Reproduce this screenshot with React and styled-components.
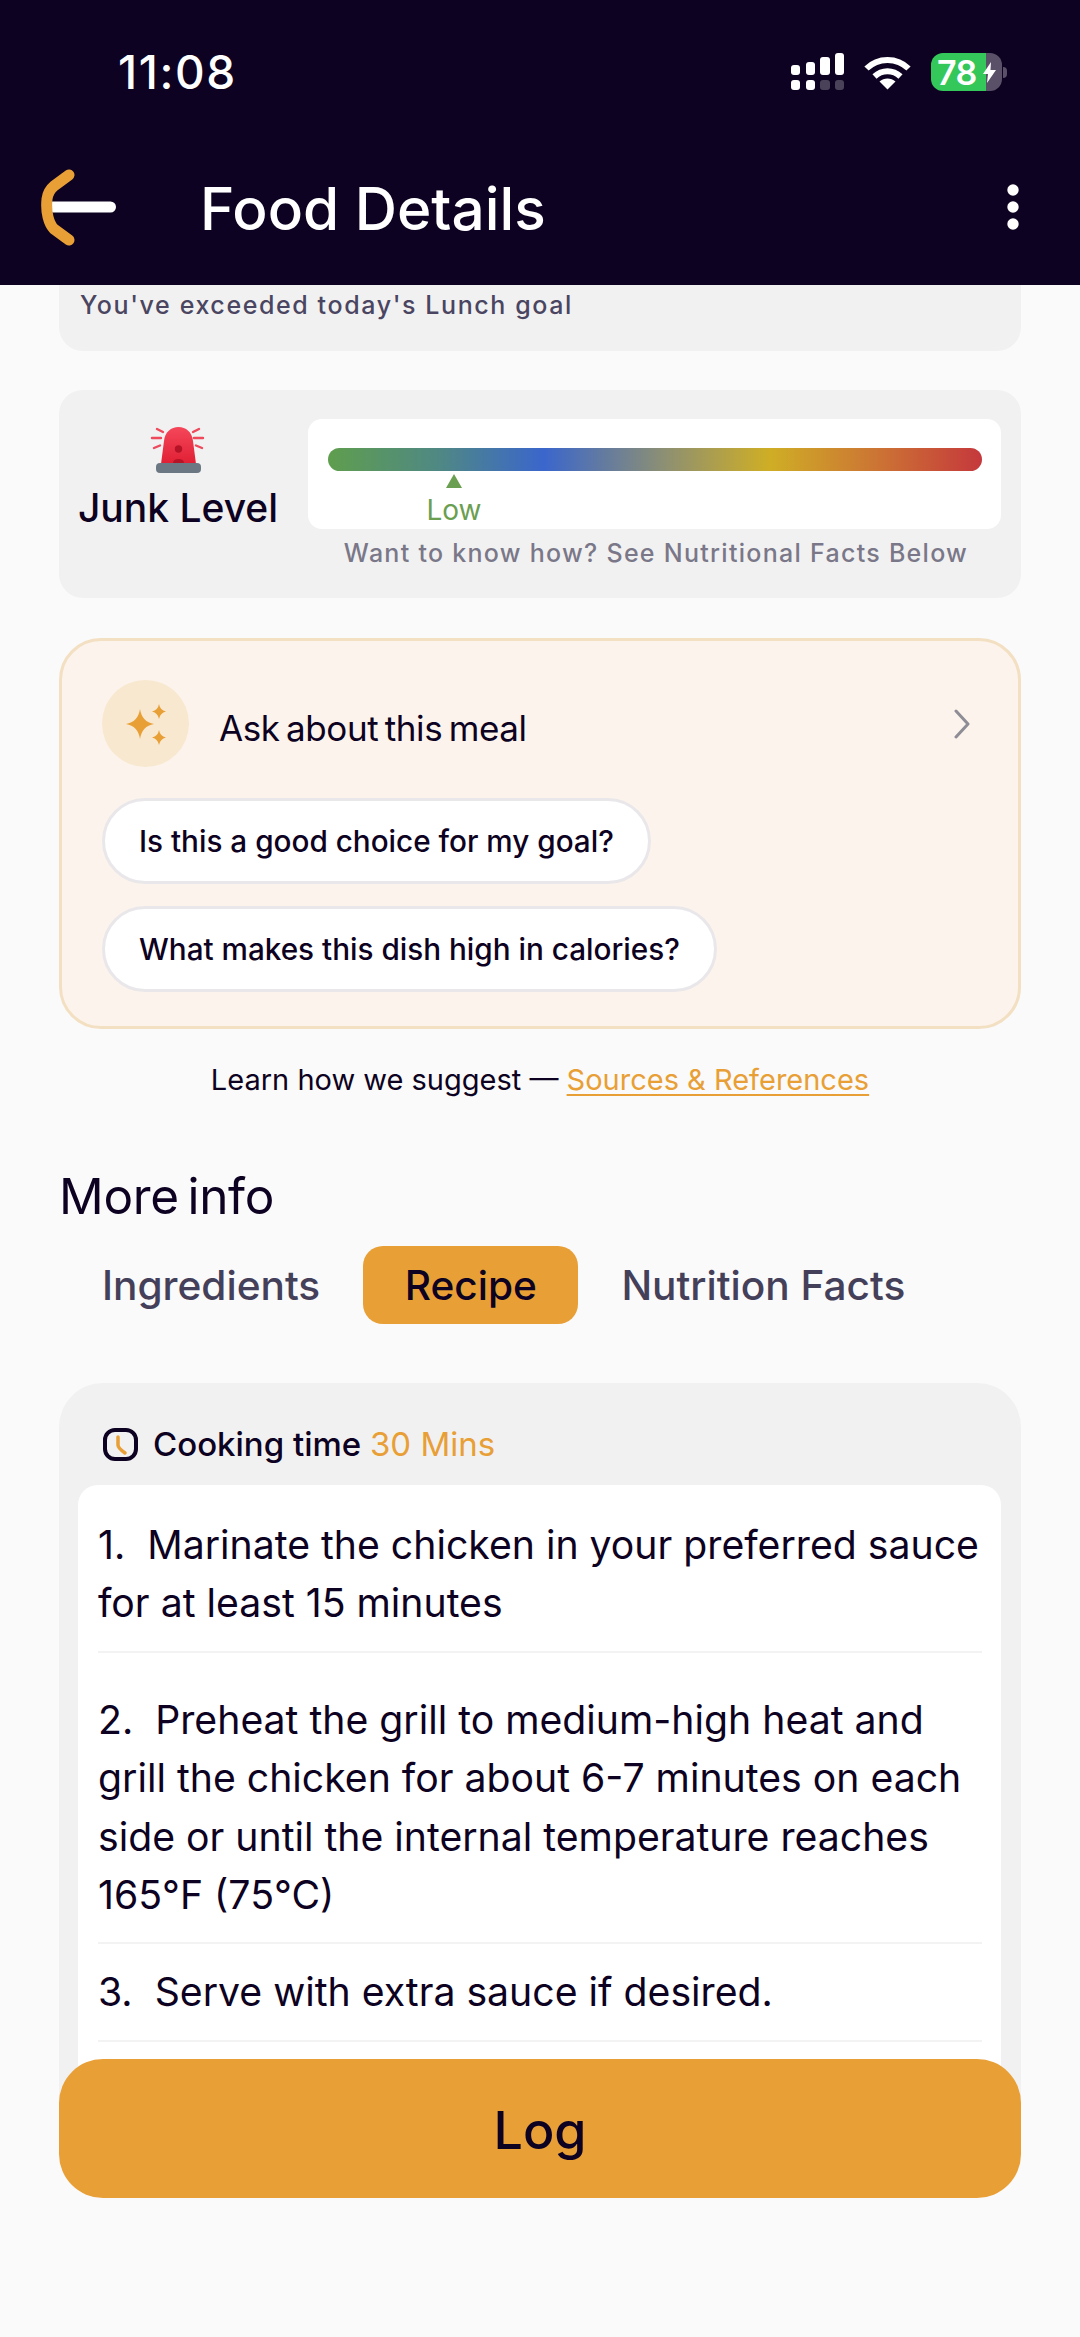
import React from "react";
import styled, { createGlobalStyle } from "styled-components";

const GlobalStyle = createGlobalStyle`
  html, body {
    margin: 0;
    padding: 0;
    background: #fafafa;
  }
  * {
    box-sizing: border-box;
  }
`;

const Phone = styled.div`
  position: relative;
  display: flex;
  flex-direction: column;
  width: 1080px;
  height: 2337px;
  overflow: hidden;
  background: #fafafa;
  color: #0d0221;
  font-family: Inter, "Liberation Sans", sans-serif;
`;

const Header = styled.header`
  flex: none;
  height: 285px;
  background: #0d0221;
  color: #fff;
`;

const StatusBar = styled.div`
  display: flex;
  align-items: center;
  justify-content: space-between;
  height: 144px;
  padding: 0 73px 0 118px;
`;

const Time = styled.span`
  font-size: 46px;
  font-weight: 500;
  letter-spacing: 1.6px;
`;

const StatusIcons = styled.div`
  display: flex;
  align-items: center;
  gap: 20px;
`;

const BatteryWrap = styled.div`
  display: flex;
  align-items: center;
  gap: 1px;
`;

const Battery = styled.div`
  position: relative;
  display: flex;
  align-items: center;
  width: 71px;
  height: 38px;
  padding-left: 6px;
  border-radius: 12px;
  overflow: hidden;
  background: linear-gradient(90deg, #34c759 0 55px, #5a5168 55px);
  font-size: 34px;
  font-weight: 600;
  letter-spacing: -0.5px;
`;

const BatteryNub = styled.div`
  width: 4px;
  height: 11px;
  border-radius: 0 5px 5px 0;
  background: #5a5168;
`;

const BatteryBolt = styled.svg`
  position: absolute;
  left: 52px;
  top: 9px;
`;

const NavBar = styled.div`
  display: flex;
  align-items: center;
  height: 126px;
  padding: 0 61px 0 40px;
`;

const NavTitle = styled.h1`
  flex: 1;
  margin: 2px 0 0 82px;
  font-size: 58.5px;
  font-weight: 500;
`;

const Content = styled.main`
  flex: 1;
  display: flex;
  flex-direction: column;
  padding: 0 59px;
`;

const GoalCard = styled.div`
  height: 66px;
  padding: 5px 21px 0;
  border-radius: 0 0 24px 24px;
  background: #f1f1f2;
  color: #4a4560;
  font-size: 25px;
  font-weight: 500;
  line-height: 30px;
  letter-spacing: 1.6px;
`;

const JunkCard = styled.section`
  display: grid;
  grid-template-columns: 238px 1fr;
  column-gap: 11px;
  height: 208px;
  margin-top: 39px;
  padding: 29px 20px 0 0;
  border-radius: 24px;
  background: #f1f1f2;
`;

const JunkLabel = styled.div`
  display: flex;
  flex-direction: column;
  align-items: center;
  padding-top: 7px;
  font-size: 39px;
  font-weight: 500;
  line-height: 46px;
`;

const JunkLabelText = styled.span`
  margin-top: 11px;
`;

const MeterColumn = styled.div`
  display: flex;
  flex-direction: column;
`;

const MeterBox = styled.div`
  height: 110px;
  padding: 29px 19px 0 20px;
  border-radius: 14px;
  background: #fff;
`;

const MeterBar = styled.div`
  height: 23px;
  border-radius: 12px;
  background: linear-gradient(90deg, #5f9e4e 0%, #4f8884 17%, #3b66cc 33%, #8f9170 52%, #cfae25 67.5%, #cc7434 84%, #c5383c 100%);
`;

const MeterMarker = styled.div`
  display: flex;
  flex-direction: column;
  align-items: center;
  width: 60px;
  margin-left: 96px;
  color: #6a9e50;
  font-size: 28px;
  line-height: 34px;
`;

const MeterArrow = styled.div`
  width: 0;
  height: 0;
  margin: 3px 0 5px;
  border-left: 8px solid transparent;
  border-right: 8px solid transparent;
  border-bottom: 14px solid #6a9e50;
`;

const MeterHint = styled.div`
  margin-top: 9px;
  padding-left: 3px;
  color: #7a7888;
  font-size: 25px;
  font-weight: 500;
  line-height: 30px;
  letter-spacing: 1.28px;
  text-align: center;
`;

const AskCard = styled.section`
  display: flex;
  flex-direction: column;
  align-items: flex-start;
  height: 391px;
  margin-top: 40px;
  padding: 39px 48px 0 40px;
  border: 3px solid #f3dfc2;
  border-radius: 42px;
  background: #fcf4ec;
`;

const AskHeader = styled.div`
  display: flex;
  align-items: center;
  width: 100%;
  margin-bottom: 31px;
`;

const AskBadge = styled.div`
  display: flex;
  align-items: center;
  justify-content: center;
  width: 87px;
  height: 87px;
  border-radius: 50%;
  background: #f8e8d0;
`;

const AskTitle = styled.span`
  flex: 1;
  margin: 8px 0 0 30px;
  font-size: 35px;
  letter-spacing: -0.4px;
  word-spacing: -3px;
`;

const Pill = styled.button`
  display: block;
  height: 86px;
  margin-bottom: 22px;
  padding: 0 34px;
  border: 3px solid #e9e7ea;
  border-radius: 43px;
  background: #fff;
  color: #0d0221;
  font-family: inherit;
  font-size: 29.7px;
  font-weight: 450;
`;

const SourcesLine = styled.p`
  margin: 31px 0 0;
  font-size: 29px;
  line-height: 40px;
  text-align: center;
`;

const SourcesLink = styled.span`
  color: #e89f36;
  text-decoration: underline;
  text-underline-offset: 4px;
  text-decoration-thickness: 2px;
`;

const SectionTitle = styled.h2`
  margin: 68px 0 0;
  font-size: 49.5px;
  font-weight: 400;
  line-height: 56px;
  letter-spacing: -0.3px;
  word-spacing: -5px;
`;

const Tabs = styled.div`
  display: flex;
  margin-top: 22px;
`;

const Tab = styled.div`
  display: flex;
  align-items: center;
  height: 78px;
  padding: 0 ${(p) => (p.$active ? "41.5px" : "43px")};
  border-radius: 20px;
  background: ${(p) => (p.$active ? "#e89f36" : "transparent")};
  color: ${(p) => (p.$active ? "#0d0221" : "#45405a")};
  font-size: 40.6px;
  font-weight: 500;
`;

const RecipeCard = styled.section`
  margin-top: 59px;
  padding: 0 20px 10px 19px;
  border-radius: 44px 44px 0 0;
  background: #f1f1f2;
`;

const CookingRow = styled.div`
  display: flex;
  align-items: center;
  gap: 15px;
  height: 102px;
  padding: 20px 0 0 25px;
  font-size: 33px;
  font-weight: 500;
`;

const CookingTime = styled.span`
  color: #e89f36;
  font-weight: 400;
`;

const Steps = styled.ol`
  margin: 0;
  padding: 0 19px 80px 20px;
  list-style: none;
  border-radius: 20px;
  background: #fff;
`;

const Step = styled.li`
  padding: ${(p) => p.$top}px 0 18px;
  border-bottom: 2px solid #f3f3f4;
  font-size: 39.2px;
  font-weight: 400;
  line-height: 58.4px;
  white-space: pre-wrap;
`;

const LogButton = styled.button`
  position: absolute;
  left: 59px;
  right: 59px;
  top: 2059px;
  height: 139px;
  padding-top: 5px;
  border: none;
  border-radius: 44px;
  background: #e89f36;
  color: #0d0221;
  font-family: inherit;
  font-size: 52px;
  font-weight: 500;
`;

function SignalIcon() {
  return (
    <svg width="53" height="38" viewBox="0 0 53 38" fill="#fff">
      <rect x="0" y="12" width="9" height="10" rx="3" />
      <rect x="15" y="9" width="9" height="13" rx="3" />
      <rect x="29" y="4" width="10" height="18" rx="3" />
      <rect x="44" y="0" width="9" height="22" rx="3" />
      <rect x="0" y="27" width="9" height="10" rx="3" />
      <rect x="15" y="27" width="9" height="10" rx="3" />
      <rect x="29" y="27" width="10" height="10" rx="3" fill="#4a4258" />
      <rect x="44" y="27" width="9" height="10" rx="3" fill="#4a4258" />
    </svg>
  );
}

function WifiIcon() {
  return (
    <svg width="47" height="35" viewBox="0 0 47 35" fill="none" stroke="#fff" strokeWidth="6">
      <path d="M2.5 13.5C14 2 33 2 44.5 13.5" />
      <path d="M10.5 21.5C18 14.5 29 14.5 36.5 21.5" />
      <path d="M23.5 34.5L15.5 26.5C20 22.5 27 22.5 31.5 26.5Z" fill="#fff" stroke="none" />
    </svg>
  );
}

function BackIcon() {
  return (
    <svg width="78" height="80" viewBox="0 0 78 80" fill="none" strokeLinecap="round" strokeLinejoin="round">
      <path d="M11 40H70.5" stroke="#fff" strokeWidth="11" />
      <path d="M29 8L14 19Q8 24 7 32Q6 42 8 50Q10 58 14 62L29 73" stroke="#e89f36" strokeWidth="11" />
    </svg>
  );
}

function MoreIcon() {
  return (
    <svg width="12" height="46" viewBox="0 0 12 46" fill="#fff">
      <circle cx="6" cy="6" r="5.7" />
      <circle cx="6" cy="23" r="5.7" />
      <circle cx="6" cy="40" r="5.7" />
    </svg>
  );
}

function SirenIcon() {
  return (
    <svg width="56" height="48" viewBox="0 0 56 48">
      <defs>
        <linearGradient id="dome" x1="0" y1="0" x2="0" y2="1">
          <stop offset="0" stopColor="#f5475a" />
          <stop offset="1" stopColor="#e01f34" />
        </linearGradient>
      </defs>
      <path d="M11 38L14 15C15 6 21 1 28.5 1C36 1 42 6 43 15L46 38Z" fill="url(#dome)" />
      <circle cx="28.5" cy="23" r="3.7" fill="#b51427" />
      <path d="M23 37Q23 33 28.5 33Q34 33 34 37Z" fill="#b51427" />
      <rect x="6" y="37" width="45" height="10" rx="4" fill="#6b7782" />
      <path d="M2 12H11M53 12H44M7 3L13 6M49 3L43 6M4 22L10 19.5M52 22L46 19.5" stroke="#ee4a5c" strokeWidth="2.4" strokeLinecap="round" />
    </svg>
  );
}

function SparkIcon() {
  return (
    <svg width="54" height="54" viewBox="-3 0 54 54" fill="#e89f36">
      <path d="M18 12Q20 25 32 27Q20 29 18 42Q16 29 4 27Q16 25 18 12Z" />
      <path d="M37 7Q38 13 44 14.5Q38 16 37 22Q36 16 30 14.5Q36 13 37 7Z" />
      <path d="M37 33Q38 39 44 40.5Q38 42 37 48Q36 42 30 40.5Q36 39 37 33Z" />
    </svg>
  );
}

function ChevronIcon() {
  return (
    <svg width="16" height="30" viewBox="0 0 16 30" fill="none" stroke="#8e8d96" strokeWidth="3" strokeLinecap="round" strokeLinejoin="round">
      <path d="M2 2L14 15L2 28" />
    </svg>
  );
}

function ClockIcon() {
  return (
    <svg width="35" height="33" viewBox="0 0 35 33" fill="none" strokeLinecap="round" strokeLinejoin="round">
      <rect x="2" y="2" width="31" height="29" rx="10" stroke="#0d0221" strokeWidth="4" />
      <path d="M15 9V17Q15 20 22 25" stroke="#e89f36" strokeWidth="3.5" />
    </svg>
  );
}

export default function App() {
  return (
    <Phone>
      <GlobalStyle />
      <Header>
        <StatusBar>
          <Time>11:08</Time>
          <StatusIcons>
            <SignalIcon />
            <WifiIcon />
            <BatteryWrap>
              <Battery>
                78
                <BatteryBolt width="13" height="21" viewBox="0 0 13 21" fill="#fff">
                  <path d="M8 0L0 12H5L4 21L13 8H7.5Z" />
                </BatteryBolt>
              </Battery>
              <BatteryNub />
            </BatteryWrap>
          </StatusIcons>
        </StatusBar>
        <NavBar>
          <BackIcon />
          <NavTitle>Food Details</NavTitle>
          <MoreIcon />
        </NavBar>
      </Header>

      <Content>
        <GoalCard>You've exceeded today's Lunch goal</GoalCard>

        <JunkCard>
          <JunkLabel>
            <SirenIcon />
            <JunkLabelText>Junk Level</JunkLabelText>
          </JunkLabel>
          <MeterColumn>
            <MeterBox>
              <MeterBar />
              <MeterMarker>
                <MeterArrow />
                Low
              </MeterMarker>
            </MeterBox>
            <MeterHint>Want to know how? See Nutritional Facts Below</MeterHint>
          </MeterColumn>
        </JunkCard>

        <AskCard>
          <AskHeader>
            <AskBadge>
              <SparkIcon />
            </AskBadge>
            <AskTitle>Ask about this meal</AskTitle>
            <ChevronIcon />
          </AskHeader>
          <Pill>Is this a good choice for my goal?</Pill>
          <Pill>What makes this dish high in calories?</Pill>
        </AskCard>

        <SourcesLine>
          Learn how we suggest — <SourcesLink>Sources &amp; References</SourcesLink>
        </SourcesLine>

        <SectionTitle>More info</SectionTitle>
        <Tabs>
          <Tab>Ingredients</Tab>
          <Tab $active>Recipe</Tab>
          <Tab>Nutrition Facts</Tab>
        </Tabs>

        <RecipeCard>
          <CookingRow>
            <ClockIcon />
            <span>
              Cooking time <CookingTime>30 Mins</CookingTime>
            </span>
          </CookingRow>
          <Steps>
            <Step $top={31}>1.  Marinate the chicken in your preferred sauce for at least 15 minutes</Step>
            <Step $top={38}>2.  Preheat the grill to medium-high heat and grill the chicken for about 6-7 minutes on each side or until the internal temperature reaches 165°F (75°C)</Step>
            <Step $top={19}>3.  Serve with extra sauce if desired.</Step>
          </Steps>
        </RecipeCard>
      </Content>

      <LogButton>Log</LogButton>
    </Phone>
  );
}
